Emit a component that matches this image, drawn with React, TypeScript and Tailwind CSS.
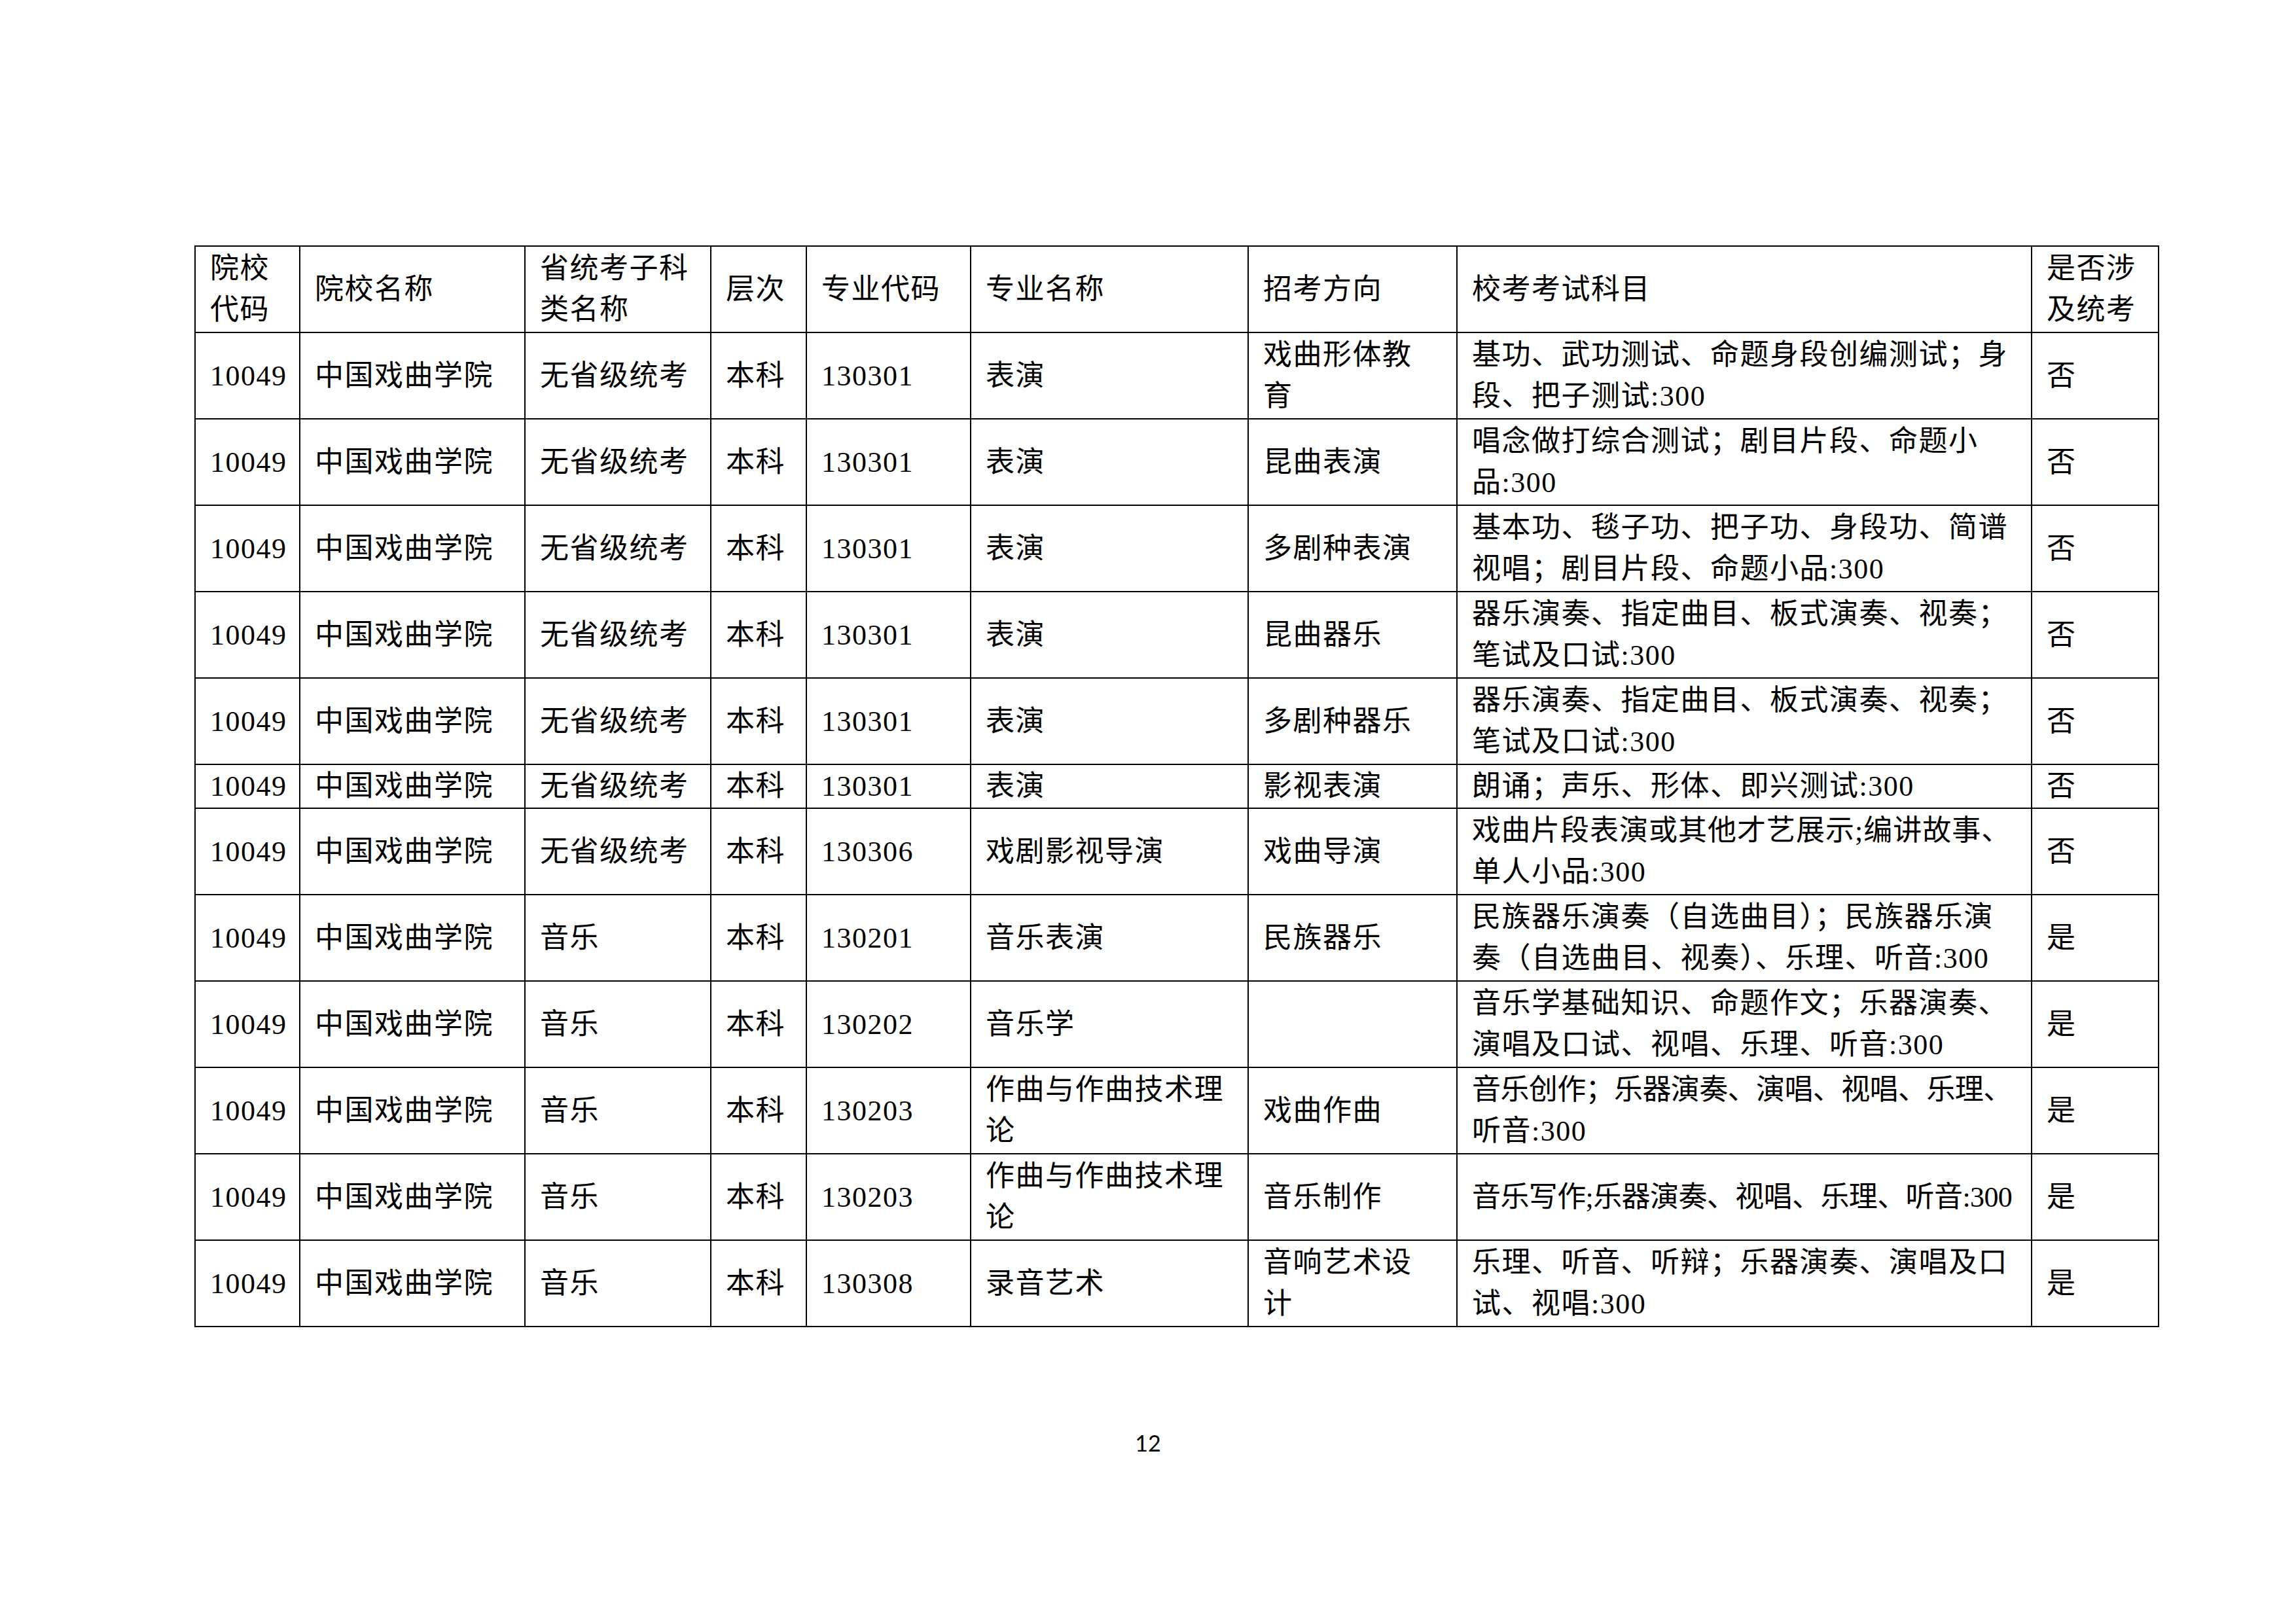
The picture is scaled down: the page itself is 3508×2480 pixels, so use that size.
type Line = string | { t: string; c: string };
type Row = { h: string; cells: Line[][] };

const colWidths = ["w-[160px]", "w-[344px]", "w-[284px]", "w-[146px]", "w-[251px]", "w-[424px]", "w-[319px]", "w-[878px]", "w-[194px]"];

const header: Line[][] = [
  ["院校", "代码"],
  ["院校名称"],
  ["省统考子科", "类名称"],
  ["层次"],
  ["专业代码"],
  ["专业名称"],
  ["招考方向"],
  ["校考考试科目"],
  ["是否涉", "及统考"],
];

const base = (cat: string, code: string): Line[][] => [["10049"], ["中国戏曲学院"], [cat], ["本科"], [code]];

const rows: Row[] = [
  { h: "h-[132px]", cells: [...base("无省级统考", "130301"), ["表演"], ["戏曲形体教", "育"], ["基功、武功测试、命题身段创编测试；身", "段、把子测试:300"], ["否"]] },
  { h: "h-[132px]", cells: [...base("无省级统考", "130301"), ["表演"], ["昆曲表演"], ["唱念做打综合测试；剧目片段、命题小", "品:300"], ["否"]] },
  { h: "h-[132px]", cells: [...base("无省级统考", "130301"), ["表演"], ["多剧种表演"], ["基本功、毯子功、把子功、身段功、简谱", "视唱；剧目片段、命题小品:300"], ["否"]] },
  { h: "h-[132px]", cells: [...base("无省级统考", "130301"), ["表演"], ["昆曲器乐"], ["器乐演奏、指定曲目、板式演奏、视奏；", "笔试及口试:300"], ["否"]] },
  { h: "h-[132px]", cells: [...base("无省级统考", "130301"), ["表演"], ["多剧种器乐"], ["器乐演奏、指定曲目、板式演奏、视奏；", "笔试及口试:300"], ["否"]] },
  { h: "h-[67px]", cells: [...base("无省级统考", "130301"), ["表演"], ["影视表演"], ["朗诵；声乐、形体、即兴测试:300"], ["否"]] },
  {
    h: "h-[132px]",
    cells: [
      ...base("无省级统考", "130306"),
      ["戏剧影视导演"],
      ["戏曲导演"],
      [{ t: "戏曲片段表演或其他才艺展示;编讲故事、", c: "whitespace-nowrap tracking-[1px]" }, "单人小品:300"],
      ["否"],
    ],
  },
  { h: "h-[132px]", cells: [...base("音乐", "130201"), ["音乐表演"], ["民族器乐"], ["民族器乐演奏（自选曲目）；民族器乐演", "奏（自选曲目、视奏）、乐理、听音:300"], ["是"]] },
  { h: "h-[132px]", cells: [...base("音乐", "130202"), ["音乐学"], [], ["音乐学基础知识、命题作文；乐器演奏、", "演唱及口试、视唱、乐理、听音:300"], ["是"]] },
  {
    h: "h-[132px]",
    cells: [
      ...base("音乐", "130203"),
      ["作曲与作曲技术理", "论"],
      ["戏曲作曲"],
      [{ t: "音乐创作；乐器演奏、演唱、视唱、乐理、", c: "whitespace-nowrap tracking-[-0.6px]" }, "听音:300"],
      ["是"],
    ],
  },
  {
    h: "h-[132px]",
    cells: [
      ...base("音乐", "130203"),
      ["作曲与作曲技术理", "论"],
      ["音乐制作"],
      [{ t: "音乐写作;乐器演奏、视唱、乐理、听音:300", c: "whitespace-nowrap tracking-[-0.6px]" }],
      ["是"],
    ],
  },
  { h: "h-[132px]", cells: [...base("音乐", "130308"), ["录音艺术"], ["音响艺术设", "计"], ["乐理、听音、听辩；乐器演奏、演唱及口", "试、视唱:300"], ["是"]] },
];

function Cell({ lines }: { lines: Line[] }) {
  return (
    <td className="border-2 border-black px-[22px] py-0 align-middle text-left">
      {lines.map((l, i) =>
        typeof l === "string" ? (
          <div key={i} className="whitespace-nowrap">
            {l}
          </div>
        ) : (
          <div key={i} className={l.c}>
            {l.t}
          </div>
        )
      )}
    </td>
  );
}

export default function App() {
  return (
    <div className="w-[3508px] h-[2480px] overflow-hidden bg-white pt-[375px] text-black font-['Liberation_Serif','Noto_Sans_CJK_SC',serif]">
      <table className="ml-[297px] w-[3000px] table-fixed border-collapse text-[44px] leading-[63px] tracking-[1.5px]">
        <colgroup>
          {colWidths.map((w) => (
            <col key={w} className={w} />
          ))}
        </colgroup>
        <tbody>
          <tr className="h-[132px]">
            {header.map((c, i) => (
              <Cell key={i} lines={c} />
            ))}
          </tr>
          {rows.map((r, i) => (
            <tr key={i} className={r.h}>
              {r.cells.map((c, j) => (
                <Cell key={j} lines={c} />
              ))}
            </tr>
          ))}
        </tbody>
      </table>

      <div className="mt-[160px] text-center font-['Lato',sans-serif] text-[34px] leading-none">12</div>
    </div>
  );
}
